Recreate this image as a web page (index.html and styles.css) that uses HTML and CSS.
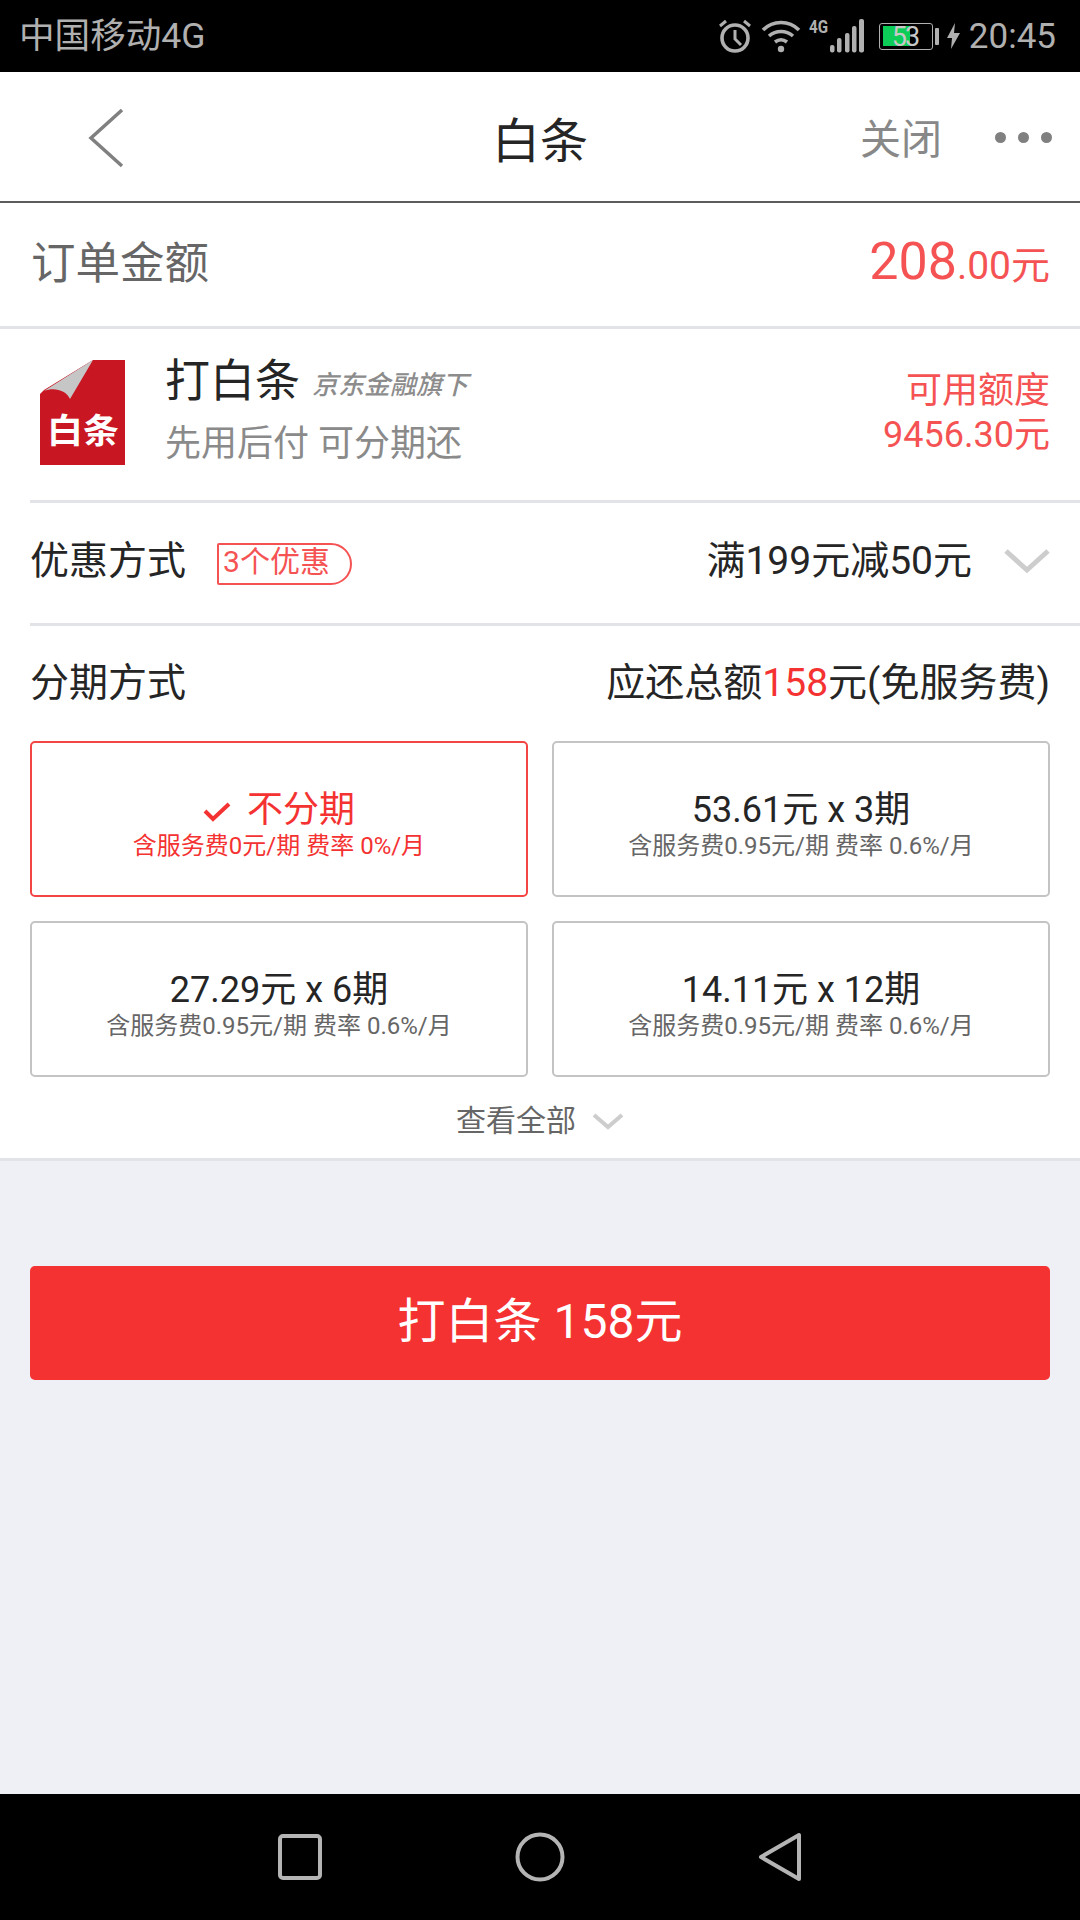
FILE: index.html
```html
<!DOCTYPE html>
<html lang="zh-CN">
<head>
<meta charset="utf-8">
<title>白条</title>
<link rel="stylesheet" href="styles.css">
</head>
<body>
<div class="screen">
  <header class="status">
    <span class="carrier">中国移动4G</span>
    <div class="status-right">
      <svg class="i-alarm" width="36" height="36" viewBox="0 0 36 36"><circle cx="18" cy="20" r="13" fill="none" stroke="#b0b0b0" stroke-width="3.6"/><path d="M18 12v9l6 6" fill="none" stroke="#b0b0b0" stroke-width="3"/><path d="M3 8l6-5M33 8l-6-5" fill="none" stroke="#b0b0b0" stroke-width="3"/></svg>
      <svg class="i-wifi" width="40" height="34" viewBox="0 0 40 34"><path d="M2 11C12 1 28 1 38 11M8 17c7-6 17-6 24 0M14 23c4-3 8-3 12 0" fill="none" stroke="#b0b0b0" stroke-width="3.6"/><circle cx="20" cy="30" r="3.2" fill="#b0b0b0"/></svg>
      <div class="signal">
        <span class="net">4G</span>
        <svg width="36" height="34" viewBox="0 0 36 34"><rect x="1" y="26" width="4.5" height="7.5" rx="2" fill="#b0b0b0"/><rect x="8" y="19" width="4.5" height="14.5" rx="2" fill="#b0b0b0"/><rect x="16" y="14" width="4.5" height="19.5" rx="2" fill="#b0b0b0"/><rect x="23" y="7" width="4.5" height="26.5" rx="2" fill="#b0b0b0"/><rect x="30" y="0" width="5" height="33.5" rx="2" fill="#b0b0b0"/></svg>
      </div>
      <div class="battery"><span class="battery-fill"></span><span class="battery-num">53</span></div>
      <span class="battery-tip"></span>
      <svg class="i-bolt" width="13" height="26" viewBox="0 0 13 26"><path d="M8 0L0 15h5l-1 11 9-16H7z" fill="#b0b0b0"/></svg>
      <span class="clock">20:45</span>
    </div>
  </header>

  <nav class="navbar">
    <svg class="back" width="36" height="60" viewBox="0 0 36 60"><path d="M34 2L3 30l31 28" fill="none" stroke="#808080" stroke-width="3.5"/></svg>
    <h1 class="nav-title">白条</h1>
    <span class="nav-close">关闭</span>
    <div class="nav-more"><i></i><i></i><i></i></div>
  </nav>

  <main class="panel">
    <section class="order">
      <span class="order-label">订单金额</span>
      <span class="order-amount">208<small>.00元</small></span>
    </section>

    <section class="pay">
      <svg class="logo" width="85" height="105" viewBox="0 0 85 105">
        <path d="M53 0H85V105H0V34L4 30Z" fill="#c81623"/>
        <path d="M53 0L30 39C26 30 14 27 4 31Z" fill="#c6c6c6"/>
        <text x="43" y="83" class="logo-text" text-anchor="middle" textLength="72" lengthAdjust="spacingAndGlyphs">白条</text>
      </svg>
      <div class="pay-info">
        <div class="pay-title">打白条<em>京东金融旗下</em></div>
        <div class="pay-sub">先用后付 可分期还</div>
      </div>
      <div class="pay-credit">可用额度<br>9456.30元</div>
    </section>

    <section class="row discount">
      <span class="row-label">优惠方式</span>
      <span class="tag">3个优惠</span>
      <span class="row-value">满199元减50元</span>
      <svg class="chev" width="46" height="26" viewBox="0 0 46 26"><path d="M2 3l21 19L44 3" fill="none" stroke="#cdcdcd" stroke-width="5"/></svg>
    </section>

    <section class="plans">
      <div class="plans-head">
        <span class="row-label">分期方式</span>
        <span class="plans-total">应还总额<b>158</b>元(免服务费)</span>
      </div>
      <div class="plan-grid">
        <div class="plan plan-on">
          <div class="plan-main"><svg class="check" width="28" height="22" viewBox="0 0 28 22"><path d="M2 10l8 8L26 3" fill="none" stroke="#f43232" stroke-width="4"/></svg>不分期</div>
          <div class="plan-sub">含服务费0元/期 费率 0%/月</div>
        </div>
        <div class="plan">
          <div class="plan-main">53.61元 x 3期</div>
          <div class="plan-sub">含服务费0.95元/期 费率 0.6%/月</div>
        </div>
        <div class="plan">
          <div class="plan-main">27.29元 x 6期</div>
          <div class="plan-sub">含服务费0.95元/期 费率 0.6%/月</div>
        </div>
        <div class="plan">
          <div class="plan-main">14.11元 x 12期</div>
          <div class="plan-sub">含服务费0.95元/期 费率 0.6%/月</div>
        </div>
      </div>
      <div class="view-all">查看全部<svg class="view-chev" width="32" height="18" viewBox="0 0 32 18"><path d="M2 3l14 12L30 3" fill="none" stroke="#cdcdcd" stroke-width="4"/></svg></div>
    </section>

    <div class="action"><button class="pay-btn">打白条 158元</button></div>
  </main>

  <footer class="sysnav">
    <svg width="46" height="46" viewBox="0 0 46 46"><rect x="3" y="2" width="40" height="42" rx="3" fill="none" stroke="#b4b4b4" stroke-width="4"/></svg>
    <svg width="50" height="50" viewBox="0 0 50 50"><circle cx="25" cy="25" r="22.5" fill="none" stroke="#b4b4b4" stroke-width="4"/></svg>
    <svg width="44" height="50" viewBox="0 0 44 50"><path d="M41 3V47L3 25Z" fill="none" stroke="#b4b4b4" stroke-width="4" stroke-linejoin="round"/></svg>
  </footer>
</div>
</body>
</html>
```
FILE: styles.css
```css
* { box-sizing: border-box; margin: 0; padding: 0; }
html, body { width: 1080px; height: 1920px; overflow: hidden; }
body { font-family: Roboto, "Noto Sans CJK SC", sans-serif; color: #252525; background: #eff0f5; }
.screen { width: 1080px; height: 1920px; display: flex; flex-direction: column; }

.status { height: 72px; background: #000; display: flex; align-items: center; justify-content: space-between; padding: 0 24px 0 19px; color: #b0b0b0; flex: none; }
.carrier { font-size: 35.6px; line-height: 72px; }
.status-right { display: flex; align-items: center; }
.i-alarm { margin-right: 8px; }
.i-wifi { margin-right: 10px; }
.signal { display: flex; align-items: flex-end; position: relative; width: 54px; justify-content: flex-end; margin-right: 14px; }
.net { position: absolute; left: -2px; top: -2px; font-size: 19px; font-weight: 700; line-height: 20px; transform: scaleX(.8); transform-origin: left center; }
.battery { width: 54px; height: 27px; border: 1.5px solid #b0b0b0; border-radius: 3px; position: relative; }
.battery-fill { position: absolute; left: 3px; top: 2.5px; bottom: 2.5px; width: 27px; background: #0ccd58; }
.battery-num { position: absolute; left: 12px; top: -3px; font-size: 27px; line-height: 32px; letter-spacing: -2px; color: #c8c8c8; }
.battery-tip { width: 4px; height: 17px; background: #b0b0b0; margin-left: 2px; margin-right: 8px; border-radius: 1px; }
.i-bolt { margin-right: 9px; }
.clock { font-size: 35px; }

.navbar { height: 131px; background: #fff; border-bottom: 2px solid #5c5c5c; display: flex; align-items: center; position: relative; flex: none; padding-right: 28px; }
.back { margin-left: 88px; margin-top: 3px; }
.nav-title { position: absolute; left: 0; right: 0; text-align: center; font-size: 48px; font-weight: 400; color: #252525; pointer-events: none; }
.nav-close { margin-left: auto; font-size: 41px; color: #888; padding-bottom: 2px; }
.nav-more { display: flex; gap: 12px; margin-left: 53px; margin-top: 2px; }
.nav-more i { width: 11px; height: 11px; border-radius: 50%; background: #808080; }

.panel { flex: 1; display: flex; flex-direction: column; }

.order { height: 126px; background: #fff; border-bottom: 3px solid #e2e3e6; display: flex; align-items: center; justify-content: space-between; padding: 0 30px 10px 31px; }
.order-label { font-size: 44.5px; color: #666; }
.order-amount { font-size: 52px; color: #f55353; margin-top: 4px; }
.order-amount small { font-size: 39px; }

.pay { height: 174px; background: #fff; display: flex; align-items: center; padding: 0 30px 0 40px; position: relative; }
.pay::after { content: ""; position: absolute; left: 30px; right: 0; bottom: 0; height: 3px; background: #e2e3e6; }
.logo { flex: none; margin-top: -8px; }
.logo-text { font-size: 34px; font-weight: 700; fill: #fff; font-family: "Noto Sans CJK SC", sans-serif; }
.pay-info { margin-left: 40px; flex: 1; margin-top: -9px; }
.pay-title { font-size: 45px; line-height: 58px; color: #252525; }
.pay-title em { font-size: 26px; font-weight: 500; color: #8c8c8c; margin-left: 12px; font-style: italic; vertical-align: 3px; }
.pay-sub { font-size: 36px; line-height: 54px; margin-top: 3px; color: #8a8a8a; }
.pay-credit { text-align: right; font-size: 36px; line-height: 44px; color: #f55353; margin-top: -6px; }

.row { background: #fff; display: flex; align-items: center; }
.discount { height: 123px; padding: 0 30px 16px 30px; position: relative; }
.discount::after { content: ""; position: absolute; left: 30px; right: 0; bottom: 0; height: 3px; background: #e2e3e6; }
.row-label { font-size: 39px; color: #252525; }
.tag { margin-left: 31px; margin-top: 14px; width: 135px; height: 42px; border: 2px solid #f55353; border-radius: 2px 21px 21px 2px; color: #f55353; font-size: 30px; line-height: 34px; padding-left: 4px; }
.row-value { margin-left: auto; font-size: 39px; }
.chev { margin-left: 32px; margin-top: 8px; }

.plans { background: #fff; border-bottom: 3px solid #e2e3e6; padding: 0 30px; height: 535px; }
.plans-head { height: 115px; padding-bottom: 10px; display: flex; align-items: center; justify-content: space-between; }
.plans-total { font-size: 39px; }
.plans-total b { font-weight: 400; color: #f43232; }
.plan-grid { display: grid; grid-template-columns: 498px 498px; gap: 24px; grid-auto-rows: 156px; }
.plan { border: 2px solid #c4c4c4; border-radius: 5px; display: flex; flex-direction: column; align-items: center; justify-content: center; padding-top: 12px; }
.plan-main { font-size: 36px; line-height: 42px; color: #252525; display: flex; align-items: center; }
.plan-sub { font-size: 24px; line-height: 30px; color: #666; }
.plan-on { border-color: #f44545; }
.plan-on .plan-main, .plan-on .plan-sub { color: #f43232; }
.check { margin-right: 16px; margin-top: 4px; }
.view-all { display: flex; align-items: center; justify-content: center; height: 88px; padding-bottom: 6px; font-size: 30px; color: #666; gap: 16px; }
.view-chev { margin-top: 6px; }

.action { padding: 105px 30px 0; }
.pay-btn { display: block; width: 100%; height: 114px; padding-bottom: 12px; background: #f43232; color: #fff; border: 0; border-radius: 5px; font-family: inherit; font-size: 48px; }

.sysnav { height: 126px; background: #000; display: grid; grid-template-columns: repeat(3, 240px); justify-content: center; justify-items: center; align-items: center; flex: none; }
```
